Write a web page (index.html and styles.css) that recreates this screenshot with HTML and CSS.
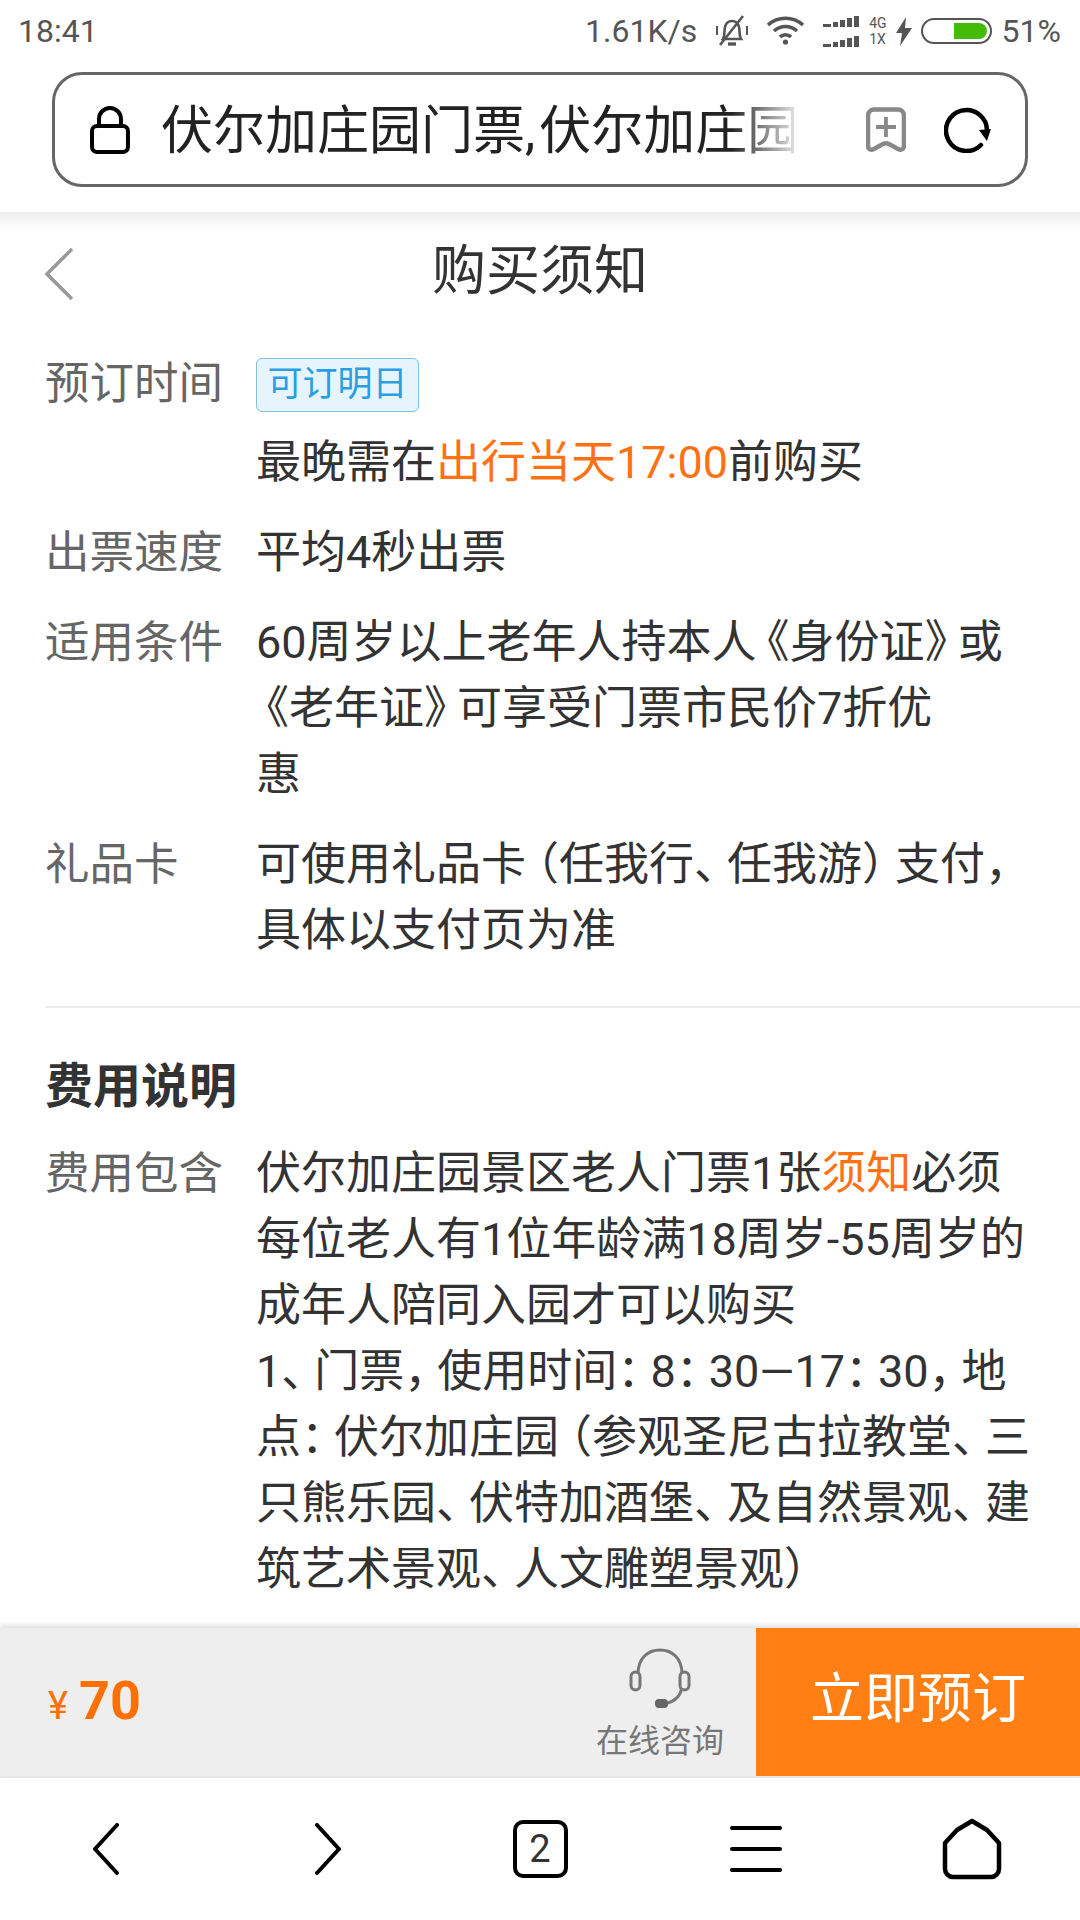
FILE: index.html
```html
<!DOCTYPE html>
<html lang="zh-CN">
<head>
    <meta charset="UTF-8">
    <meta name="viewport" content="width=device-width, initial-scale=1.0">
    <title>购买须知</title>
    <link rel="stylesheet" href="styles.css">
</head>
<body>

    <div class="status-bar">
        <span class="time">18:41</span>
        <div class="status-right">
            <span class="speed">1.61K/s</span>
            <svg class="icon-bell" width="36" height="36" viewBox="0 0 36 36" fill="none" stroke="#555" stroke-width="2.6">
                <path d="M9 26c2-3 1-8 2-12 1-4 4-6 7-6s6 2 7 6c1 4 0 9 2 12z"/>
                <path d="M14 31h8" stroke-width="3.4"/>
                <path d="M6 32 29 3"/>
                <path d="M3 13v9M33 13v9" stroke-width="2"/>
            </svg>
            <svg class="icon-wifi" width="39" height="30" viewBox="0 0 39 30" fill="none" stroke="#555" stroke-width="3.6">
                <path d="M2 9c10-9 25-9 35 0"/>
                <path d="M8 15c7-6 16-6 23 0"/>
                <path d="M14 21c3-3 8-3 11 0"/>
                <circle cx="19.500" cy="26" r="2.600" fill="#555" stroke="none"/>
            </svg>
            <div class="signal">
                <svg width="37" height="11" viewBox="0 0 37 11" fill="#555"><path d="M0 8h8v3H0zM10 6h5v5h-5zM17 4h5v7h-5zM24 2h5v9h-5zM31 0h5v11h-5z"/></svg>
                <svg width="37" height="11" viewBox="0 0 37 11" fill="#555"><path d="M0 8h8v3H0zM10 6h5v5h-5zM17 4h5v7h-5zM24 2h5v9h-5zM31 0h5v11h-5z"/></svg>
            </div>
            <div class="net-type"><span>4G</span><span>1X</span></div>
            <svg class="icon-bolt" width="16" height="29" viewBox="0 0 16 29" fill="#555"><path d="M10 0 0 16h6L4 29 16 11H9z"/></svg>
            <div class="battery"><div class="battery-level"></div></div>
            <span class="percent">51%</span>
        </div>
    </div>

    <div class="toolbar">
        <div class="url-box">
            <svg class="icon-lock" width="40" height="48" viewBox="0 0 40 48" fill="none" stroke="#000" stroke-width="4">
                <rect x="2" y="20" width="36" height="26" rx="5"/>
                <path d="M9 20v-7a11 11 0 0 1 22 0v7"/>
            </svg>
            <div class="url-text">伏尔加庄园门票<span class="comma">,</span>伏尔加庄园门票</div>
            <svg class="icon-mark" width="40" height="46" viewBox="0 0 40 46" fill="none" stroke="#888" stroke-width="4.500">
                <path d="M8 2.500h24a6 6 0 0 1 6 6V39c0 3-3 5-6 3l-9-5c-2-1-4-1-6 0l-9 5c-3 2-6 0-6-3V8.500a6 6 0 0 1 6-6z"/>
                <path d="M20 10v20M10 20h20" stroke-width="3.800"/>
            </svg>
            <svg class="icon-reload" width="48" height="46" viewBox="0 0 48 46" fill="none" stroke="#000" stroke-width="4.500" stroke-linecap="round">
                <path d="M37 38A20.500 20.500 0 1 1 43 24"/>
                <path d="M35 23l12-1-4 12z" fill="#000" stroke="none"/>
            </svg>
        </div>
    </div>

    <div class="content">
        <div class="page-head">
            <svg class="icon-back" width="30" height="54" viewBox="0 0 30 54" fill="none" stroke="#999" stroke-width="3.500">
                <path d="M28 2 3 27l25 25"/>
            </svg>
            <h1>购买须知</h1>
        </div>

        <div class="rows">
            <div class="row">
                <div class="label">预订时间</div>
                <div class="value">
                    <div class="tag-line"><span class="tag">可订明日</span></div>
                    最晚需在<span class="hl">出行当天17:00</span>前购买
                </div>
            </div>
            <div class="row">
                <div class="label">出票速度</div>
                <div class="value">平均4秒出票</div>
            </div>
            <div class="row">
                <div class="label">适用条件</div>
                <div class="value">60周岁以上老年人持本人<span class="open">《</span>身份证<span class="p">》</span>或<br><span class="open">《</span>老年证<span class="p">》</span>可享受门票市民价7折优<br>惠</div>
            </div>
            <div class="row">
                <div class="label">礼品卡</div>
                <div class="value">可使用礼品卡<span class="open">（</span>任我行<span class="p">、</span>任我游<span class="p">）</span>支付<span class="p">，</span><br>具体以支付页为准</div>
            </div>
        </div>

        <div class="fee">
            <h2>费用说明</h2>
            <div class="row">
                <div class="label">费用包含</div>
                <div class="value">伏尔加庄园景区老人门票1张<span class="hl">须知</span>必须<br>每位老人有1位年龄满18周岁-55周岁的<br>成年人陪同入园才可以购买<br>1<span class="p">、</span>门票<span class="p">，</span>使用时间<span class="p">：</span>8<span class="p">：</span>30—17<span class="p">：</span>30<span class="p">，</span>地<br>点<span class="p">：</span>伏尔加庄园<span class="open">（</span>参观圣尼古拉教堂<span class="p">、</span>三<br>只熊乐园<span class="p">、</span>伏特加酒堡<span class="p">、</span>及自然景观<span class="p">、</span>建<br>筑艺术景观<span class="p">、</span>人文雕塑景观<span class="p">）</span></div>
            </div>
        </div>
    </div>

    <div class="buy-bar">
        <div class="price"><span class="yen">¥</span><span class="amount">70</span></div>
        <div class="consult">
            <svg width="62" height="62" viewBox="0 0 62 62" fill="none" stroke="#777" stroke-width="3">
                <path d="M9 26C9 10 19 2 31 2s22 8 22 24v10c0 12-8 18-18 20"/>
                <rect x="2" y="24" width="9" height="18" rx="4.500" fill="#eee"/>
                <rect x="51" y="24" width="9" height="18" rx="4.500" fill="#eee"/>
                <rect x="26" y="51" width="13" height="9" rx="4" fill="#666" stroke="none"/>
            </svg>
            <span>在线咨询</span>
        </div>
        <div class="buy-btn">立即预订</div>
    </div>

    <div class="nav-bar">
        <svg class="nav-back" width="28" height="52" viewBox="0 0 28 52" fill="none" stroke="#000" stroke-width="4" stroke-linecap="round" stroke-linejoin="round"><path d="M25 2 3 26l22 24"/></svg>
        <svg class="nav-next" width="28" height="52" viewBox="0 0 28 52" fill="none" stroke="#000" stroke-width="4" stroke-linecap="round" stroke-linejoin="round"><path d="m3 2 22 24L3 50"/></svg>
        <div class="tab-count">2</div>
        <div class="menu"><i></i><i></i><i></i></div>
        <svg width="60" height="62" viewBox="0 0 60 62" fill="none" stroke="#000" stroke-width="4.500" stroke-linejoin="round"><path d="M30 3 45 12 57 25v26a8 8 0 0 1-8 8H11a8 8 0 0 1-8-8V25L15 12z"/></svg>
    </div>

</body>
</html>
```

FILE: styles.css
```css
* {
    box-sizing: border-box;
    margin: 0;
    padding: 0;
}
body {
    width: 1080px;
    height: 1920px;
    overflow: hidden;
    background-color: #fff;
    font-family: Roboto, "Noto Sans CJK SC", sans-serif;
    color: #333;
    display: flex;
    flex-direction: column;
}

/* status bar */
.status-bar {
    height: 62px;
    padding: 0 19px 0 18px;
    display: flex;
    align-items: center;
    justify-content: space-between;
    color: #555;
    font-size: 32px;
}
.status-right {
    display: flex;
    align-items: center;
}
.speed {
    margin-right: 17px;
}
.icon-wifi {
    margin-left: 16px;
}
.signal {
    margin-left: 18px;
    display: flex;
    flex-direction: column;
    gap: 9px;
}
.net-type {
    margin-left: 9px;
    display: flex;
    flex-direction: column;
    font-size: 14px;
    line-height: 16px;
}
.icon-bolt {
    margin-left: 9px;
}
.battery {
    margin-left: 9px;
    width: 71px;
    height: 26px;
    padding: 3px;
    border: 2px solid #555;
    border-radius: 13px;
    display: flex;
    justify-content: flex-end;
}
.battery-level {
    width: 33px;
    background-color: #44bb06;
    border-radius: 0 9px 9px 0;
}
.percent {
    margin-left: 10px;
}

/* url bar */
.toolbar {
    height: 150px;
    padding: 10px 52px 0;
    position: relative;
    z-index: 1;
}
.url-box {
    height: 115px;
    border: 3px solid #666;
    border-radius: 30px;
    padding: 0 33px 0 35px;
    display: flex;
    align-items: center;
}
.url-text {
    width: 634px;
    margin-top: 4px;
    margin-left: 31px;
    margin-right: 72px;
    font-size: 52px;
    line-height: 60px;
    color: #222;
    white-space: nowrap;
    overflow: hidden;
    -webkit-mask-image: linear-gradient(to right, #000 90%, rgba(0, 0, 0, 0.15) 100%);
    mask-image: linear-gradient(to right, #000 90%, rgba(0, 0, 0, 0.15) 100%);
}
.comma {
    margin-right: 4px;
}
.icon-reload {
    margin-left: 38px;
}

/* content */
.content {
    height: 1416px;
    overflow: hidden;
    background: linear-gradient(#ededed, #fff 18px);
}
.page-head {
    height: 139px;
    padding: 31px 45px 0;
    position: relative;
}
.icon-back {
    position: absolute;
    left: 44px;
    top: 35px;
}
h1 {
    text-align: center;
    font-size: 54px;
    font-weight: 400;
    line-height: 58px;
    color: #333;
}
.rows {
    margin-left: 45px;
    padding-bottom: 18px;
    border-bottom: 2px solid #eee;
}
.row {
    display: flex;
    margin-bottom: 24px;
}
.label {
    width: 211px;
    flex-shrink: 0;
    color: #666;
    font-size: 44.5px;
    line-height: 66px;
}
.value {
    width: 790px;
    font-size: 45px;
    line-height: 66px;
    color: #333;
    white-space: nowrap;
}
.hl {
    color: #ff7214;
}
/* punctuation is set narrower than full width */
.p {
    letter-spacing: -12px;
}
.open {
    margin-left: -12px;
}
.tag-line {
    height: 70px;
    margin-top: 7px;
    margin-bottom: 2px;
}
.tag {
    display: inline-block;
    width: 163px;
    height: 54px;
    border: 1px solid #7fc0e4;
    border-radius: 6px;
    background-color: #e6f5fd;
    color: #2a9ee3;
    font-size: 35px;
    line-height: 52px;
    text-align: center;
    vertical-align: top;
}
.fee {
    padding: 49px 0 0 45px;
}
h2 {
    font-size: 48px;
    line-height: 60px;
    font-weight: 700;
    color: #333;
    margin-bottom: 24px;
}

/* bottom bar */
.buy-bar {
    height: 148px;
    background-color: #eee;
    display: flex;
    align-items: stretch;
    box-shadow: 0 -3px 5px rgba(0, 0, 0, 0.12);
    position: relative;
}
.price {
    flex: 1;
    padding-left: 48px;
    display: flex;
    align-items: center;
    color: #ff7000;
}
.yen {
    font-size: 38px;
    margin-top: 8px;
    margin-right: 11px;
}
.amount {
    font-size: 54px;
    font-weight: 700;
    margin-top: -4px;
}
.consult {
    width: 160px;
    margin-right: 16px;
    padding-top: 20px;
    display: flex;
    flex-direction: column;
    align-items: center;
    color: #777;
    font-size: 32px;
    line-height: 44px;
}
.consult svg {
    margin-bottom: 9px;
}
.buy-btn {
    width: 324px;
    background-color: #ff7f14;
    color: #fff;
    font-size: 54px;
    text-align: center;
    line-height: 144px;
}

/* bottom nav */
.nav-bar {
    flex: 1;
    border-top: 2px solid #e8e8e8;
    display: grid;
    grid-template-columns: repeat(5, 1fr);
    align-items: center;
    justify-items: center;
}
.nav-back {
    margin-right: 4px;
}
.nav-next {
    margin-left: 8px;
}
.tab-count {
    width: 55px;
    height: 58px;
    border: 4px solid #000;
    border-radius: 10px;
    font-size: 38px;
    line-height: 50px;
    text-align: center;
    color: #333;
}
.menu {
    width: 52px;
    display: flex;
    flex-direction: column;
    gap: 17px;
}
.menu i {
    display: block;
    height: 4px;
    background-color: #000;
    border-radius: 2px;
}
```
